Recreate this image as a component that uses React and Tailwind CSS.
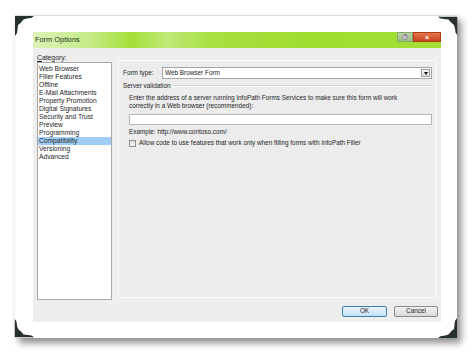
import React from 'react';

const categories = [
  'Web Browser',
  'Filler Features',
  'Offline',
  'E-Mail Attachments',
  'Property Promotion',
  'Digital Signatures',
  'Security and Trust',
  'Preview',
  'Programming',
  'Compatibility',
  'Versioning',
  'Advanced',
];

// dark photo-corner tabs on the paper
const Corner = ({ className, rotate }) => (
  <svg
    width="19"
    height="20"
    viewBox="0 0 19 20"
    className={`absolute ${className}`}
    style={{ transform: `rotate(${rotate}deg)` }}
  >
    <path d="M0 0 H19 L16 2 Q10 2.5 8 4 Q6 7 3 9 Q2.5 14 2 17 L0 20 Z" fill="#26302c" />
  </svg>
);

const App = () => {
  return (
    <div className="w-[474px] h-[356px] bg-white overflow-hidden pt-[15px] pl-[15px] font-['Liberation_Sans',sans-serif] text-[#1e1e1e]">
      {/* Paper */}
      <div className="relative w-[442px] h-[323px] bg-white border-t border-[#dcdcdc] shadow-[4px_5px_7px_rgba(0,0,0,0.45)] pt-[16px] pl-[18px]">
        <Corner className="left-0 top-0" rotate={0} />
        <Corner className="right-0 top-0" rotate={90} />
        <Corner className="right-0 bottom-0" rotate={180} />
        <Corner className="left-0 bottom-0" rotate={270} />

        {/* Dialog */}
        <div className="w-[408px] h-[290px] flex flex-col">
          {/* Title bar */}
          <div className="h-[16px] flex items-start bg-[linear-gradient(to_right,#dcf2b8_0%,#c6eb88_14%,#a4df38_24%,#bfe977_33%,#a8e040_44%,#9fdd2e_70%,#a4e036_100%)]">
            <span className="pl-[2px] pt-[3px] text-[7.4px] leading-[9px] text-[#223018]">Form Options</span>
            <div className="ml-auto flex">
              <div className="w-[16px] h-[10px] bg-[linear-gradient(#bcd6a4,#98bc80)] border border-[#86a870] flex items-center justify-center">
                <div className="w-[6px] h-[6px] rounded-full bg-[#d8d0e4] border border-[#8a8a9a] flex items-center justify-center text-[4.5px] leading-none font-bold text-[#555]">
                  ?
                </div>
              </div>
              <div className="w-[28px] h-[10px] bg-[linear-gradient(#e4764c,#c9431c)] border border-[#b03c18] flex items-center justify-center text-white text-[7px] leading-none font-bold">
                ×
              </div>
            </div>
          </div>

          {/* Body */}
          <div className="flex-1 bg-[#eeeeee] flex flex-col">
            <div className="flex pl-[4px] pt-[5px]">
              {/* Category list */}
              <div className="flex flex-col">
                <div className="h-[9px] text-[6.8px] leading-[9px]">
                  <span className="underline">C</span>ategory:
                </div>
                <div className="w-[75px] h-[238px] bg-white border border-[#a9a9a9] pt-[2px]">
                  {categories.map((c) => (
                    <div
                      key={c}
                      className={`h-[8px] text-[6.7px] leading-[8px] pl-[1px] ${c === 'Compatibility' ? 'bg-[#9fcdf5]' : ''}`}
                    >
                      {c}
                    </div>
                  ))}
                </div>
              </div>

              {/* Right panel */}
              <div className="ml-[6px] mt-[7px] w-[318px] h-[238px] border border-[#fafafa] bg-[#ececec] pl-[4px] pr-[3px] pt-[6px] text-[6.4px]">
                <div className="flex items-center h-[12px]">
                  <span className="w-[39px] leading-[8px]">Form type:</span>
                  <div className="flex-1 h-[12px] bg-white border border-[#a5a5a5] flex items-center pl-[2px]">
                    <span className="leading-[8px]">Web Browser Form</span>
                    <div className="ml-auto mr-[1px] w-[9px] h-[8px] bg-[linear-gradient(#f6f6f6,#dcdcdc)] border border-[#9a9a9a] flex items-center justify-center">
                      <div className="w-0 h-0 border-l-[2.5px] border-r-[2.5px] border-t-[3px] border-l-transparent border-r-transparent border-t-black" />
                    </div>
                  </div>
                </div>

                <div className="flex items-center mt-[3px] h-[8px]">
                  <span className="leading-[8px]">Server validation</span>
                  <div className="flex-1 ml-[2px] h-0 border-t border-[#d5d5d5] border-b border-b-white" />
                </div>

                <div className="pl-[6px] mt-[4px]">
                  <div className="leading-[8px]">
                    Enter the address of a server running InfoPath Forms Services to make sure this form will work
                  </div>
                  <div className="leading-[8px]">correctly in a Web browser (recommended):</div>
                  <div className="mt-[4px] h-[11px] bg-white border border-[#b5b5b5]" />
                  <div className="mt-[3px] leading-[8px]">Example: http://www.contoso.com/</div>
                  <div className="mt-[3px] flex items-center">
                    <div className="w-[7px] h-[7px] border border-[#8e8f8f] bg-[linear-gradient(#dcdcdc,#f4f4f4)] mr-[3px]" />
                    <span className="leading-[8px]">
                      Allow code to use features that work only when filling forms with InfoPath Filler
                    </span>
                  </div>
                </div>
              </div>
            </div>

            {/* Buttons */}
            <div className="flex justify-end gap-[7px] pr-[3px] mt-[6px] text-[6.4px]">
              <button className="w-[45px] h-[11px] rounded-[2px] border border-[#3c7fb1] bg-[linear-gradient(#eaf6fd,#c4e2f6)] leading-none">
                OK
              </button>
              <button className="w-[44px] h-[11px] rounded-[2px] border border-[#8a8a8a] bg-[linear-gradient(#f2f2f2,#d8d8d8)] leading-none">
                Cancel
              </button>
            </div>
          </div>
        </div>
      </div>
    </div>
  );
};

export default App;
